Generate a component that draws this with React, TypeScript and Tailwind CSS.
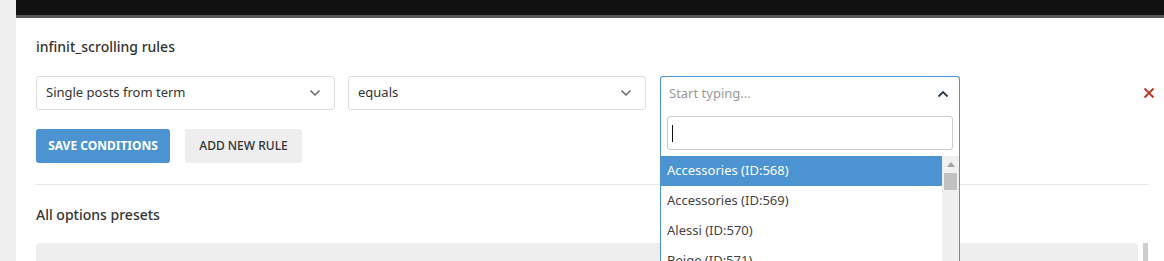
import React from 'react';

function ChevronDown() {
  return (
    <svg width="12" height="8" viewBox="0 0 12 8" className="text-[#666]">
      <polyline points="1.5,1.5 6,6 10.5,1.5" fill="none" stroke="currentColor" strokeWidth="1.5" />
    </svg>
  );
}

function ChevronUp() {
  return (
    <svg width="12" height="8" viewBox="0 0 12 8" className="text-[#2d3a4a]">
      <polyline points="1.5,6.5 6,2 10.5,6.5" fill="none" stroke="currentColor" strokeWidth="1.8" />
    </svg>
  );
}

function Select({ label, width }: { label: string; width: string }) {
  return (
    <div className={`${width} h-[34px] flex items-center justify-between pl-[9px] pr-[13px] border border-[#dddddd] rounded-[3px] bg-white text-[13px] text-[#333]`}>
      <span>{label}</span>
      <ChevronDown />
    </div>
  );
}

const items = ['Accessories (ID:568)', 'Accessories (ID:569)', 'Alessi (ID:570)', 'Beige (ID:571)'];

export default function App() {
  return (
    <div className="flex w-[1164px] h-[261px] overflow-hidden bg-[#f0f0f0] font-['Noto_Sans',sans-serif]">
      <div className="w-4 shrink-0" />
      <div className="flex-1 flex flex-col min-h-0">
        <div className="h-[15px] shrink-0 bg-[#111111]" />
        <div className="h-[3px] shrink-0 bg-[#555555]" />
        <div className="flex-1 min-h-0 bg-white border-r border-[#e6e6e6] pl-5 pr-[20px]">
          <h2 className="pt-[19px] text-[14px] leading-5 text-[#333] font-medium">infinit_scrolling rules</h2>
          <div className="mt-[19px] flex items-center gap-[13px]">
            <Select label="Single posts from term" width="w-[299px]" />
            <Select label="equals" width="w-[298px]" />
            <div className="relative ml-px w-[300px] h-[34px]">
              <div className="h-[34px] flex items-center justify-between pl-[8px] pr-[10px] border border-[#4b93d1] border-b-0 rounded-t-[3px] bg-white text-[13px] text-[#999]">
                <span>Start typing...</span>
                <ChevronUp />
              </div>
              <div className="absolute left-0 top-[34px] w-[300px] h-[200px] bg-white border-x border-[#4b93d1] z-10">
                <div className="px-[6px] pt-[6px]">
                  <div className="h-[34px] border border-[#cccccc] rounded-[3px] flex items-center pl-[4px]">
                    <div className="w-px h-[17px] bg-[#111]" />
                  </div>
                </div>
                <div className="mt-[6px] flex">
                  <ul className="flex-1 text-[13px]">
                    {items.map((it, i) => (
                      <li
                        key={it}
                        className={`h-[30px] flex items-center pl-[6px] ${i === 0 ? 'bg-[#4b93d1] text-white' : 'text-[#444]'}`}
                      >
                        {it}
                      </li>
                    ))}
                  </ul>
                  <div className="w-[17px] h-[120px] bg-[#f0f0f0] flex flex-col items-center">
                    <svg width="8" height="5" viewBox="0 0 8 5" className="mt-[6px]">
                      <polygon points="0,5 4,0 8,5" fill="#a3a3a3" />
                    </svg>
                    <div className="mt-[6px] w-[13px] h-[17px] bg-[#c1c1c1]" />
                  </div>
                </div>
              </div>
            </div>
            <button className="ml-auto -mr-[9px] w-4 h-4 flex items-center justify-center">
              <svg width="12" height="12" viewBox="0 0 12 12">
                <path d="M1.5 1.5 L10.5 10.5 M10.5 1.5 L1.5 10.5" stroke="#c0392b" strokeWidth="2" fill="none" />
              </svg>
            </button>
          </div>
          <div className="mt-[19px] flex gap-[15px]">
            <button className="w-[134px] h-[34px] rounded-[3px] bg-[#4b93d1] text-white text-[12px] font-bold">SAVE CONDITIONS</button>
            <button className="w-[117px] h-[34px] rounded-[3px] bg-[#eeeeee] text-[#333] text-[12px] font-medium">ADD NEW RULE</button>
          </div>
          <div className="mt-[21px] border-t border-[#e5e5e5]" />
          <h2 className="mt-[20px] text-[14px] leading-5 text-[#333] font-medium">All options presets</h2>
          <div className="mt-[18px] flex gap-[5px]">
            <div className="w-[1102px] h-10 bg-[#eeeeee] rounded-t-[4px]" />
            <div className="w-[5px] h-10 bg-[#cdcdcd]" />
          </div>
        </div>
      </div>
    </div>
  );
}
